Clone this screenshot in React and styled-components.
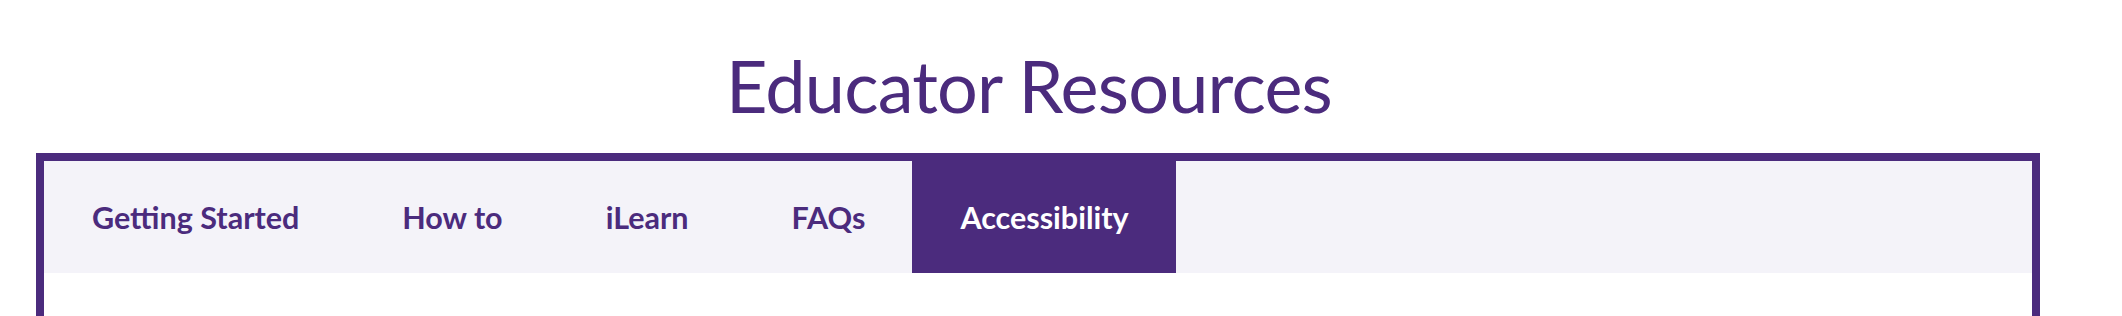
import styled, { createGlobalStyle } from 'styled-components';

const purple = '#4b2b7d';

const GlobalStyle = createGlobalStyle`
  body {
    margin: 0;
    background: #fff;
    font-family: Lato, "Open Sans", sans-serif;
  }
`;

const tabs = ['Getting Started', 'How to', 'iLearn', 'FAQs', 'Accessibility'];

export default function App() {
  const activeTab = 'Accessibility';

  return (
    <>
      <GlobalStyle />
      <Page>
        <Title>Educator Resources</Title>
        <Panel>
          <TabBar>
            {tabs.map((tab, i) => (
              <Tab key={tab} $active={tab === activeTab} $first={i === 0}>
                {tab}
              </Tab>
            ))}
          </TabBar>
          <PanelBody />
        </Panel>
      </Page>
    </>
  );
}

const Page = styled.div`
  width: 2004px;
  margin-left: 36px;
`;

const Title = styled.h1`
  margin: 0;
  padding: 42px 18px 25px 0;
  line-height: 86px;
  font-size: 72px;
  font-weight: 400;
  letter-spacing: -0.8px;
  text-align: center;
  color: ${purple};
`;

const Panel = styled.section`
  border: 8px solid ${purple};
  border-bottom: none;
`;

const TabBar = styled.ul`
  display: flex;
  margin: 0;
  padding: 0;
  list-style: none;
  background: #f4f3f9;
`;

const Tab = styled.li`
  height: 112px;
  line-height: 112px;
  padding: 0 47px 0 48px;
  margin-left: ${({ $first, $active }) => ($first || $active ? '0' : '8px')};
  font-size: 30.5px;
  font-weight: 700;
  color: ${({ $active }) => ($active ? '#fff' : purple)};
  background: ${({ $active }) => ($active ? purple : 'transparent')};
  cursor: pointer;
`;

const PanelBody = styled.div`
  height: 120px;
  background: #fff;
`;
